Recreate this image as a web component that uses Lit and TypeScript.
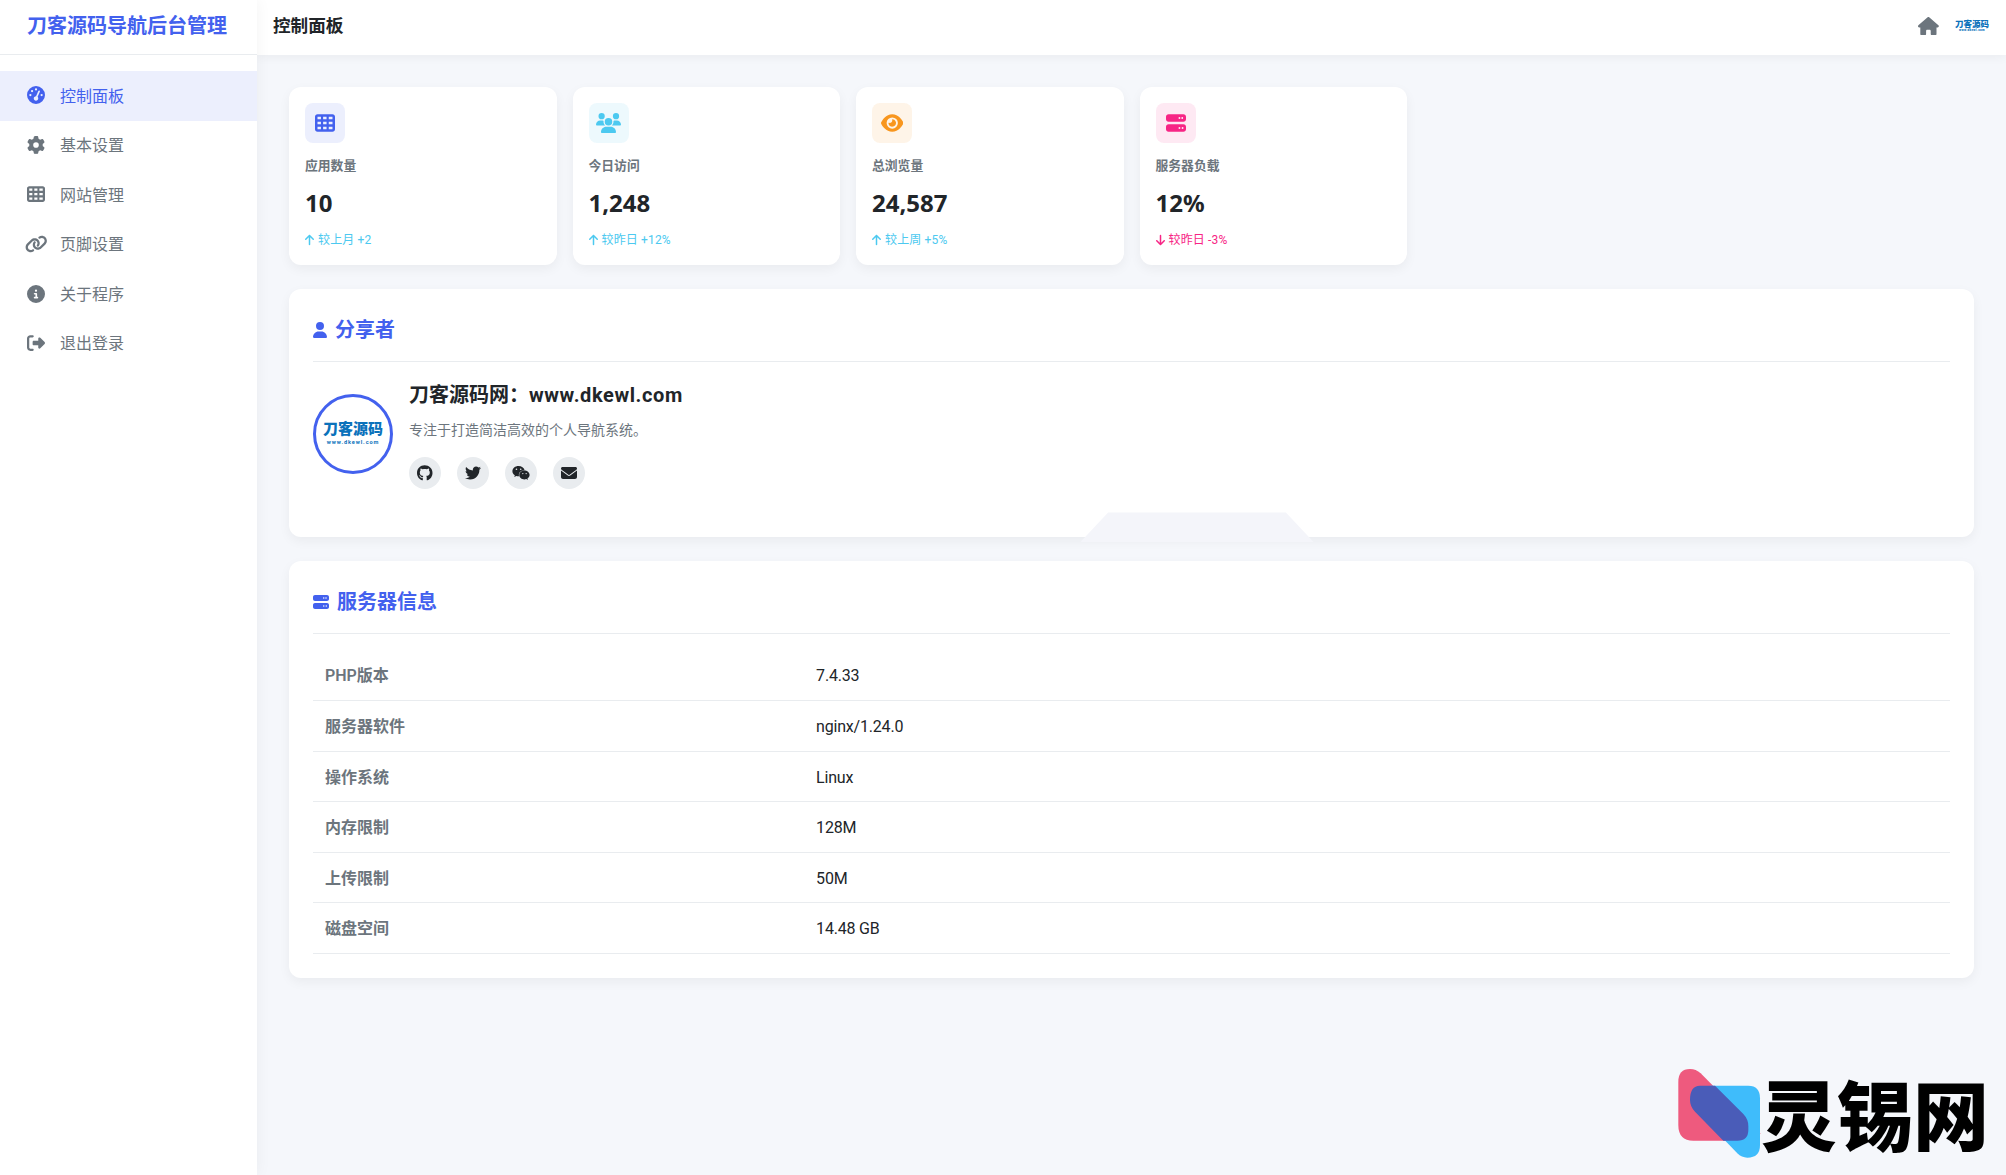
import { LitElement, html, css, svg } from "lit";
import { customElement } from "lit/decorators.js";

const P: Record<string, [number, string]> = {
  gauge: [512, "M0 256a256 256 0 1 1 512 0A256 256 0 1 1 0 256zM288 96a32 32 0 1 0 -64 0 32 32 0 1 0 64 0zM256 416c35.3 0 64-28.7 64-64c0-17.4-6.9-33.1-18.1-44.6L366 161.7c5.3-12.1-.2-26.3-12.3-31.6s-26.3 .2-31.6 12.3L257.9 288c-.6 0-1.3 0-1.9 0c-35.3 0-64 28.7-64 64s28.7 64 64 64zM176 144a32 32 0 1 0 -64 0 32 32 0 1 0 64 0zM96 288a32 32 0 1 0 0-64 32 32 0 1 0 0 64zm352-32a32 32 0 1 0 -64 0 32 32 0 1 0 64 0z"],
  gear: [512, "M495.9 166.6c3.2 8.7 .5 18.4-6.4 24.6l-43.3 39.4c1.1 8.3 1.7 16.8 1.7 25.4s-.6 17.1-1.7 25.4l43.3 39.4c6.9 6.2 9.6 15.9 6.4 24.6c-4.4 11.9-9.7 23.3-15.8 34.3l-4.7 8.1c-6.6 11-14 21.4-22.1 31.2c-5.9 7.2-15.7 9.6-24.5 6.8l-55.7-17.7c-13.4 10.3-28.2 18.9-44 25.4l-12.5 57.1c-2 9.1-9 16.3-18.2 17.8c-13.8 2.3-28 3.5-42.5 3.5s-28.7-1.2-42.5-3.5c-9.2-1.5-16.2-8.7-18.2-17.8l-12.5-57.1c-15.8-6.5-30.6-15.1-44-25.4L83.1 425.9c-8.8 2.8-18.6 .3-24.5-6.8c-8.1-9.8-15.5-20.2-22.1-31.2l-4.7-8.1c-6.1-11-11.4-22.4-15.8-34.3c-3.2-8.7-.5-18.4 6.4-24.6l43.3-39.4C64.6 273.1 64 264.6 64 256s.6-17.1 1.7-25.4L22.4 191.2c-6.9-6.2-9.6-15.9-6.4-24.6c4.4-11.9 9.7-23.3 15.8-34.3l4.7-8.1c6.6-11 14-21.4 22.1-31.2c5.9-7.2 15.7-9.6 24.5-6.8l55.7 17.7c13.4-10.3 28.2-18.9 44-25.4l12.5-57.1c2-9.1 9-16.3 18.2-17.8C227.3 1.2 241.5 0 256 0s28.7 1.2 42.5 3.5c9.2 1.5 16.2 8.7 18.2 17.8l12.5 57.1c15.8 6.5 30.6 15.1 44 25.4l55.7-17.7c8.8-2.8 18.6-.3 24.5 6.8c8.1 9.8 15.5 20.2 22.1 31.2l4.7 8.1c6.1 11 11.4 22.4 15.8 34.3zM256 336a80 80 0 1 0 0-160 80 80 0 1 0 0 160z"],
  table: [512, "M64 32C28.7 32 0 60.7 0 96V416c0 35.3 28.7 64 64 64H448c35.3 0 64-28.7 64-64V96c0-35.3-28.7-64-64-64H64zm88 64v64H64V96h88zm56 0h88v64H208V96zm240 0v64H352V96h96zM64 224h88v64H64V224zm232 0v64H208V224h88zm64 0h88v64H352V224zM152 352v64H64V352h88zm56 0h88v64H208V352zm240 0v64H352V352h96z"],
  link: [640, "M579.8 267.7c56.5-56.5 56.5-148 0-204.5c-50-50-128.8-56.5-186.3-15.4l-1.6 1.1c-14.4 10.3-17.7 30.3-7.4 44.6s30.3 17.7 44.6 7.4l1.6-1.1c32.1-22.9 76-19.3 103.8 8.6c31.5 31.5 31.5 82.5 0 114L422.3 334.8c-31.5 31.5-82.5 31.5-114 0c-27.9-27.9-31.5-71.8-8.6-103.8l1.1-1.6c10.3-14.4 6.9-34.4-7.4-44.6s-34.4-6.9-44.6 7.4l-1.1 1.6C206.5 251.2 213 330 263 380c56.5 56.5 148 56.5 204.5 0L579.8 267.7zM60.2 244.3c-56.5 56.5-56.5 148 0 204.5c50 50 128.8 56.5 186.3 15.4l1.6-1.1c14.4-10.3 17.7-30.3 7.4-44.6s-30.3-17.7-44.6-7.4l-1.6 1.1c-32.1 22.9-76 19.3-103.8-8.6C74 372 74 321 105.5 289.5L217.7 177.2c31.5-31.5 82.5-31.5 114 0c27.9 27.9 31.5 71.8 8.6 103.9l-1.1 1.6c-10.3 14.4-6.9 34.4 7.4 44.6s34.4 6.9 44.6-7.4l1.1-1.6C433.5 260.8 427 182 377 132c-56.5-56.5-148-56.5-204.5 0L60.2 244.3z"],
  info: [512, "M256 512A256 256 0 1 0 256 0a256 256 0 1 0 0 512zM216 336h24V272H216c-13.3 0-24-10.7-24-24s10.7-24 24-24h48c13.3 0 24 10.7 24 24v88h8c13.3 0 24 10.7 24 24s-10.7 24-24 24H216c-13.3 0-24-10.7-24-24s10.7-24 24-24zm40-208a32 32 0 1 1 0 64 32 32 0 1 1 0-64z"],
  logout: [512, "M377.9 105.9L500.7 228.7c7.2 7.2 11.3 17.1 11.3 27.3s-4.1 20.1-11.3 27.3L377.9 406.1c-6.4 6.4-15 9.9-24 9.9c-18.7 0-33.9-15.2-33.9-33.9l0-62.1-128 0c-17.7 0-32-14.3-32-32l0-64c0-17.7 14.3-32 32-32l128 0 0-62.1c0-18.7 15.2-33.9 33.9-33.9c9 0 17.6 3.6 24 9.9zM160 96L96 96c-17.7 0-32 14.3-32 32l0 256c0 17.7 14.3 32 32 32l64 0c17.7 0 32 14.3 32 32s-14.3 32-32 32l-64 0c-53 0-96-43-96-96L0 128C0 75 43 32 96 32l64 0c17.7 0 32 14.3 32 32s-14.3 32-32 32z"],
  users: [640, "M144 0a80 80 0 1 1 0 160A80 80 0 1 1 144 0zM512 0a80 80 0 1 1 0 160A80 80 0 1 1 512 0zM0 298.7C0 239.8 47.8 192 106.7 192h42.7c15.9 0 31 3.5 44.6 9.7c-1.3 7.2-1.9 14.7-1.9 22.3c0 38.2 16.8 72.5 43.3 96c-.2 0-.4 0-.7 0H21.3C9.6 320 0 310.4 0 298.7zM405.3 320c-.2 0-.4 0-.7 0c26.6-23.5 43.3-57.8 43.3-96c0-7.6-.7-15-1.9-22.3c13.6-6.3 28.7-9.7 44.6-9.7h42.7C592.2 192 640 239.8 640 298.7c0 11.8-9.6 21.3-21.3 21.3H405.3zM224 224a96 96 0 1 1 192 0 96 96 0 1 1 -192 0zM128 485.3C128 411.7 187.7 352 261.3 352H378.7C452.3 352 512 411.7 512 485.3c0 14.7-11.9 26.7-26.7 26.7H154.7c-14.7 0-26.7-11.9-26.7-26.7z"],
  eye: [576, "M288 32c-80.8 0-145.5 36.8-192.6 80.6C48.6 156 17.3 208 2.5 243.7c-3.3 7.9-3.3 16.7 0 24.6C17.3 304 48.6 356 95.4 399.4C142.5 443.2 207.2 480 288 480s145.5-36.8 192.6-80.6c46.8-43.5 78.1-95.4 93-131.1c3.3-7.9 3.3-16.7 0-24.6c-14.9-35.7-46.2-87.7-93-131.1C433.5 68.8 368.8 32 288 32zM144 256a144 144 0 1 1 288 0 144 144 0 1 1 -288 0zm144-64c0 35.3-28.7 64-64 64c-7.1 0-13.9-1.2-20.3-3.3c-5.5-1.8-11.9 1.6-11.7 7.4c.3 6.9 1.3 13.8 3.2 20.7c13.7 51.2 66.4 81.6 117.6 67.9s81.6-66.4 67.9-117.6c-11.1-41.5-47.8-69.4-88.6-71.1c-5.8-.2-9.2 6.1-7.4 11.7c2.1 6.4 3.3 13.2 3.3 20.3z"],
  server: [512, "M64 32C28.7 32 0 60.7 0 96v64c0 35.3 28.7 64 64 64H448c35.3 0 64-28.7 64-64V96c0-35.3-28.7-64-64-64H64zm280 72a24 24 0 1 1 0 48 24 24 0 1 1 0-48zm48 24a24 24 0 1 1 48 0 24 24 0 1 1 -48 0zM64 288c-35.3 0-64 28.7-64 64v64c0 35.3 28.7 64 64 64H448c35.3 0 64-28.7 64-64V352c0-35.3-28.7-64-64-64H64zm280 72a24 24 0 1 1 0 48 24 24 0 1 1 0-48zm56 24a24 24 0 1 1 48 0 24 24 0 1 1 -48 0z"],
  user: [448, "M224 256A128 128 0 1 0 224 0a128 128 0 1 0 0 256zm-45.7 48C79.8 304 0 383.8 0 482.3C0 498.7 13.3 512 29.7 512H418.3c16.4 0 29.7-13.3 29.7-29.7C448 383.8 368.2 304 269.7 304H178.3z"],
  house: [576, "M575.8 255.5c0 18-15 32.1-32 32.1h-32l.7 160.2c0 2.7-.2 5.4-.5 8.1V472c0 22.1-17.9 40-40 40H456c-1.1 0-2.2 0-3.3-.1c-1.4 .1-2.8 .1-4.2 .1H416 392c-22.1 0-40-17.9-40-40V448 384c0-17.7-14.3-32-32-32H256c-17.7 0-32 14.3-32 32v64 24c0 22.1-17.9 40-40 40H160 128.1c-1.5 0-3-.1-4.5-.2c-1.2 .1-2.4 .2-3.6 .2H104c-22.1 0-40-17.9-40-40V360c0-.9 0-1.9 .1-2.8V287.6H32c-18 0-32-14-32-32.1c0-9 3-17 10-24L266.4 8c7-7 15-8 22-8s15 2 21 7L564.8 231.5c8 7 12 15 11 24z"],
  up: [384, "M214.6 41.4c-12.5-12.5-32.8-12.5-45.3 0l-160 160c-12.5 12.5-12.5 32.8 0 45.3s32.8 12.5 45.3 0L160 141.2V448c0 17.7 14.3 32 32 32s32-14.3 32-32V141.2L329.4 246.6c12.5 12.5 32.8 12.5 45.3 0s12.5-32.8 0-45.3l-160-160z"],
  down: [384, "M169.4 470.6c12.5 12.5 32.8 12.5 45.3 0l160-160c12.5-12.5 12.5-32.8 0-45.3s-32.8-12.5-45.3 0L224 370.8 224 64c0-17.7-14.3-32-32-32s-32 14.3-32 32l0 306.7L54.6 265.4c-12.5-12.5-32.8-12.5-45.3 0s-12.5 32.8 0 45.3l160 160z"],
  github: [496, "M165.9 397.4c0 2-2.3 3.6-5.2 3.6-3.3 .3-5.6-1.3-5.6-3.6 0-2 2.3-3.6 5.2-3.6 3-.3 5.6 1.3 5.6 3.6zm-31.1-4.5c-.7 2 1.3 4.3 4.3 4.9 2.6 1 5.6 0 6.2-2s-1.3-4.3-4.3-5.2c-2.6-.7-5.5 .3-6.2 2.3zm44.2-1.7c-2.9 .7-4.9 2.6-4.6 4.9 .3 2 2.9 3.3 5.9 2.6 2.9-.7 4.9-2.6 4.6-4.6-.3-1.9-3-3.2-5.9-2.9zM244.8 8C106.1 8 0 113.3 0 252c0 110.9 69.8 205.8 169.5 239.2 12.8 2.3 17.3-5.6 17.3-12.1 0-6.2-.3-40.4-.3-61.4 0 0-70 15-84.7-29.8 0 0-11.4-29.1-27.8-36.6 0 0-22.9-15.7 1.6-15.4 0 0 24.9 2 38.6 25.8 21.9 38.6 58.6 27.5 72.9 20.9 2.3-16 8.8-27.1 16-33.7-55.9-6.2-112.3-14.3-112.3-110.5 0-27.5 7.6-41.3 23.6-58.9-2.6-6.5-11.1-33.3 2.6-67.9 20.9-6.5 69 27 69 27 20-5.6 41.5-8.5 62.8-8.5s42.8 2.9 62.8 8.5c0 0 48.1-33.6 69-27 13.7 34.7 5.2 61.4 2.6 67.9 16 17.7 25.8 31.5 25.8 58.9 0 96.5-58.9 104.2-114.8 110.5 9.2 7.9 17 22.9 17 46.4 0 33.7-.3 75.4-.3 83.6 0 6.5 4.6 14.4 17.3 12.1C428.2 457.8 496 362.9 496 252 496 113.3 383.5 8 244.8 8z"],
  twitter: [512, "M459.37 151.716c.325 4.548.325 9.097.325 13.645 0 138.72-105.583 298.558-298.558 298.558-59.452 0-114.68-17.219-161.137-47.106 8.447.974 16.568 1.299 25.34 1.299 49.055 0 94.213-16.568 130.274-44.832-46.132-.975-84.792-31.188-98.112-72.772 6.498.974 12.995 1.624 19.818 1.624 9.421 0 18.843-1.3 27.614-3.573-48.081-9.747-84.143-51.98-84.143-102.985v-1.299c13.969 7.797 30.214 12.67 47.431 13.319-28.264-18.843-46.781-51.005-46.781-87.391 0-19.492 5.197-37.36 14.294-52.954 51.655 63.675 129.3 105.258 216.365 109.807-1.624-7.797-2.599-15.918-2.599-24.04 0-57.828 46.782-104.934 104.934-104.934 30.213 0 57.502 12.67 76.67 33.137 23.715-4.548 46.456-13.32 66.599-25.34-7.798 24.366-24.366 44.833-46.132 57.827 21.117-2.273 41.584-8.122 60.426-16.243-14.292 20.791-32.161 39.308-52.628 54.253z"],
  weixin: [576, "M385.2 167.6c6.4 0 12.6.3 18.8 1.1C387.4 90.3 303.3 32 207.7 32 100.5 32 13 104.8 13 197.4c0 53.4 29.3 97.5 77.9 131.6l-19.3 58.6 68-34.1c24.4 4.8 43.8 9.7 68.2 9.7 6.2 0 12.1-.3 18.3-.8-4-12.9-6.2-26.6-6.2-40.8-.1-84.9 72.9-154 165.3-154zm-104.5-52.9c14.5 0 24.2 9.7 24.2 24.4 0 14.5-9.7 24.2-24.2 24.2-14.8 0-29.3-9.7-29.3-24.2.1-14.7 14.6-24.4 29.3-24.4zm-136.4 48.6c-14.5 0-29.3-9.7-29.3-24.2 0-14.8 14.8-24.4 29.3-24.4 14.8 0 24.4 9.7 24.4 24.4 0 14.6-9.6 24.2-24.4 24.2zM563 319.4c0-77.9-77.9-141.3-165.4-141.3-92.7 0-165.4 63.4-165.4 141.3S305 460.7 397.6 460.7c19.3 0 38.9-5.1 58.6-9.9l53.4 29.3-14.8-48.6C534 402.1 563 363.2 563 319.4zm-219.1-24.5c-9.7 0-19.3-9.7-19.3-19.6 0-9.7 9.7-19.3 19.3-19.3 14.8 0 24.4 9.7 24.4 19.3 0 10-9.7 19.6-24.4 19.6zm107.1 0c-9.7 0-19.3-9.7-19.3-19.6 0-9.7 9.7-19.3 19.3-19.3 14.5 0 24.4 9.7 24.4 19.3.1 10-9.9 19.6-24.4 19.6z"],
  envelope: [512, "M48 64C21.5 64 0 85.5 0 112c0 15.1 7.1 29.3 19.2 38.4L236.8 313.6c11.4 8.5 27 8.5 38.4 0L492.8 150.4c12.1-9.1 19.2-23.3 19.2-38.4c0-26.5-21.5-48-48-48H48zM0 176V384c0 35.3 28.7 64 64 64H448c35.3 0 64-28.7 64-64V176L294.4 339.2c-22.8 17.1-53.9 17.1-76.8 0L0 176z"],
};

const ico = (name: string) => {
  const [w, d] = P[name];
  return html`<svg class="fa" viewBox="0 0 ${w} 512" aria-hidden="true">${svg`<path fill="currentColor" d="${d}"></path>`}</svg>`;
};

const MENU = [
  ["gauge", "控制面板", true],
  ["gear", "基本设置", false],
  ["table", "网站管理", false],
  ["link", "页脚设置", false],
  ["info", "关于程序", false],
  ["logout", "退出登录", false],
] as const;

const STATS = [
  { icon: "table", tone: "blue", label: "应用数量", value: "10", dir: "up", trend: "较上月 +2" },
  { icon: "users", tone: "cyan", label: "今日访问", value: "1,248", dir: "up", trend: "较昨日 +12%" },
  { icon: "eye", tone: "orange", label: "总浏览量", value: "24,587", dir: "up", trend: "较上周 +5%" },
  { icon: "server", tone: "pink", label: "服务器负载", value: "12%", dir: "down", trend: "较昨日 -3%" },
];

const INFO = [
  ["PHP版本", "7.4.33"],
  ["服务器软件", "nginx/1.24.0"],
  ["操作系统", "Linux"],
  ["内存限制", "128M"],
  ["上传限制", "50M"],
  ["磁盘空间", "14.48 GB"],
];

@customElement("app-root")
export class AppRoot extends LitElement {
  static styles = css`
    :host {
      display: flex;
      position: relative;
      min-height: 100vh;
      overflow: hidden;
      background: #f5f7fb;
      color: #212529;
      font-family: Roboto, "Noto Sans CJK SC", sans-serif;
      font-size: 16px;
      line-height: 1.6;
    }
    * { box-sizing: border-box; }
    .fa { display: block; height: 1em; width: auto; }

    .side {
      width: 257px;
      flex: none;
      background: #fff;
      box-shadow: 0 0 15px rgba(0, 0, 0, 0.05);
      z-index: 2;
    }
    .brand {
      height: 55px;
      padding: 10px 27px 0;
      border-bottom: 1px solid #e9ecef;
      color: #4361ee;
      font-size: 20px;
      font-weight: 700;
      white-space: nowrap;
    }
    .menu { padding-top: 16px; display: flex; flex-direction: column; }
    .item {
      display: flex;
      align-items: center;
      gap: 12px;
      height: 49.6px;
      padding: 0 24px;
      color: #6c757d;
    }
    .item.on { background: rgba(67, 97, 238, 0.1); color: #4361ee; }
    .item-ico { width: 24px; display: flex; justify-content: center; font-size: 18px; margin-top: -1px; }
    .item-txt { padding-top: 1px; }

    .main { flex: 1; min-width: 0; display: flex; flex-direction: column; }
    .top {
      height: 55px;
      background: #fff;
      box-shadow: 0 2px 10px rgba(0, 0, 0, 0.05);
      display: flex;
      align-items: center;
      justify-content: space-between;
      padding: 0 17px 3px 16px;
    }
    .top h1 { margin: 0; font-size: 17.6px; font-weight: 700; color: #212529; }
    .top-r { display: flex; align-items: center; gap: 16px; }
    .home { font-size: 18.5px; color: #6c757d; }
    .mini {
      width: 34px;
      display: flex;
      flex-direction: column;
      align-items: center;
      color: #0b72bb;
      line-height: 1;
      font-weight: 900;
      white-space: nowrap;
    }
    .mini b { font-size: 8.5px; font-weight: 900; }
    .mini i { font-size: 3px; font-style: normal; letter-spacing: 0.3px; margin-top: 1px; }

    .content { padding: 32px; display: flex; flex-direction: column; gap: 24px; }
    .stats { display: grid; grid-template-columns: repeat(6, 1fr); gap: 16px; }
    .stat {
      background: #fff;
      border-radius: 12px;
      padding: 16px;
      box-shadow: 0 4px 12px rgba(0, 0, 0, 0.05);
      height: 178px;
    }
    .stat-ico {
      width: 40px;
      height: 40px;
      border-radius: 8px;
      display: flex;
      align-items: center;
      justify-content: center;
      font-size: 20px;
      margin-bottom: 12px;
    }
    .blue { background: rgba(67, 97, 238, 0.1); color: #4361ee; }
    .cyan { background: rgba(76, 201, 240, 0.1); color: #4cc9f0; }
    .orange { background: rgba(248, 150, 30, 0.1); color: #f8961e; }
    .pink { background: rgba(247, 37, 133, 0.1); color: #f72585; }
    .stat-label { font-size: 12.8px; font-weight: 600; color: #6c757d; margin-bottom: 8px; padding-top: 1px; }
    .stat-val {
      font-family: "Noto Sans", "Noto Sans CJK SC", sans-serif;
      font-size: 24px;
      font-weight: 700;
      margin-bottom: 8px;
      line-height: 38.4px;
    }
    .trend { display: flex; align-items: center; gap: 4px; font-size: 12px; }
    .trend span { letter-spacing: 0.15px; }
    .trend.up { color: #4cc9f0; }
    .trend.down { color: #f72585; }
    .trend .fa { height: 12px; }

    .panel {
      position: relative;
      background: #fff;
      border-radius: 12px;
      padding: 24px;
      box-shadow: 0 4px 12px rgba(0, 0, 0, 0.05);
    }
    .panel-t {
      display: flex;
      align-items: center;
      gap: 8px;
      margin: 0 0 16px;
      padding: 1px 0 15px;
      border-bottom: 1px solid #e9ecef;
      font-size: 20px;
      font-weight: 700;
      color: #4361ee;
    }
    .panel-t .fa { height: 16px; }
    .notch {
      position: absolute;
      left: 791px;
      bottom: -5px;
      width: 234px;
      height: 30px;
      background: #f4f5fa;
      clip-path: polygon(0 100%, 12% 0, 88% 0, 100% 100%);
    }

    .profile { display: flex; align-items: center; gap: 16px; margin-bottom: 24px; padding-top: 1px; }
    .avatar {
      width: 80px;
      height: 80px;
      flex: none;
      border-radius: 50%;
      border: 3px solid #4361ee;
      display: flex;
      flex-direction: column;
      align-items: center;
      justify-content: center;
      color: #0b72bb;
      line-height: 1;
      white-space: nowrap;
    }
    .avatar b { font-size: 15px; font-weight: 900; }
    .avatar i { font-size: 5.6px; font-style: normal; font-weight: 700; letter-spacing: 0.9px; margin-top: 3px; }
    .who h3 { margin: 0 0 8px; font-size: 20px; font-weight: 700; line-height: 32px; }
    .lat { letter-spacing: 0.6px; }
    .who p { margin: 0 0 16px; font-size: 14px; color: #6c757d; line-height: 22.4px; }
    .soc { display: flex; gap: 16px; }
    .soc span {
      width: 32px;
      height: 32px;
      border-radius: 50%;
      background: #e9ecef;
      display: flex;
      align-items: center;
      justify-content: center;
      font-size: 16px;
      color: #212529;
    }

    table { width: 100%; border-collapse: collapse; }
    td { padding: 13px 12px 11px; border-bottom: 1px solid #e9ecef; letter-spacing: -0.2px; }
    td:first-child { width: 30%; color: #6c757d; font-weight: 600; letter-spacing: 0; }

    .wm {
      position: absolute;
      right: 0;
      bottom: 0;
      width: 346px;
      height: 125px;
      z-index: 3;
    }
    .wm svg { position: absolute; inset: 0; width: 100%; height: 100%; }
    .wm div {
      position: absolute;
      left: 101px;
      top: 17px;
      font-family: "Noto Sans CJK SC", sans-serif;
      font-size: 76px;
      line-height: 90px;
      font-weight: 900;
      color: #000;
      white-space: nowrap;
    }
  `;

  render() {
    return html`
      <aside class="side">
        <div class="brand">刀客源码导航后台管理</div>
        <nav class="menu">
          ${MENU.map(
            ([i, t, on]) => html`<div class="item ${on ? "on" : ""}"><span class="item-ico">${ico(i)}</span><span class="item-txt">${t}</span></div>`
          )}
        </nav>
      </aside>
      <div class="main">
        <header class="top">
          <h1>控制面板</h1>
          <div class="top-r">
            <span class="home">${ico("house")}</span>
            <span class="mini"><b>刀客源码</b><i>www.dkewl.com</i></span>
          </div>
        </header>
        <main class="content">
          <section class="stats">
            ${STATS.map(
              (s) => html`<div class="stat">
                <div class="stat-ico ${s.tone}">${ico(s.icon)}</div>
                <div class="stat-label">${s.label}</div>
                <div class="stat-val">${s.value}</div>
                <div class="trend ${s.dir}">${ico(s.dir)}<span>${s.trend}</span></div>
              </div>`
            )}
          </section>
          <section class="panel">
            <h2 class="panel-t">${ico("user")}分享者</h2>
            <div class="profile">
              <div class="avatar"><b>刀客源码</b><i>www.dkewl.com</i></div>
              <div class="who">
                <h3>刀客源码网：<span class="lat">www.dkewl.com</span></h3>
                <p>专注于打造简洁高效的个人导航系统。</p>
                <div class="soc">
                  <span>${ico("github")}</span>
                  <span>${ico("twitter")}</span>
                  <span>${ico("weixin")}</span>
                  <span>${ico("envelope")}</span>
                </div>
              </div>
            </div>
            <div class="notch"></div>
          </section>
          <section class="panel">
            <h2 class="panel-t">${ico("server")}服务器信息</h2>
            <table>
              ${INFO.map(([k, v]) => html`<tr><td>${k}</td><td>${v}</td></tr>`)}
            </table>
          </section>
        </main>
      </div>
      <div class="wm">
        <svg viewBox="0 0 1038 375" aria-hidden="true">
          <path fill="#ee5a7e" d="M55 95 Q55 57 90 57 Q108 57 122 70 L300 250 L300 272 L100 272 Q55 272 55 225 Z" />
          <path fill="#3fbcfb" d="M150 107 L265 107 Q300 107 300 145 L300 285 Q300 323 262 323 Q245 323 232 310 L150 225 Z" />
          <path fill="#4a5cb8" d="M120 107 L165 107 L250 192 Q265 208 265 228 L265 240 Q265 272 232 272 L190 272 L105 185 Q90 170 90 150 Q90 107 120 107 Z" />
        </svg>
        <div>灵锡网</div>
      </div>
    `;
  }
}
